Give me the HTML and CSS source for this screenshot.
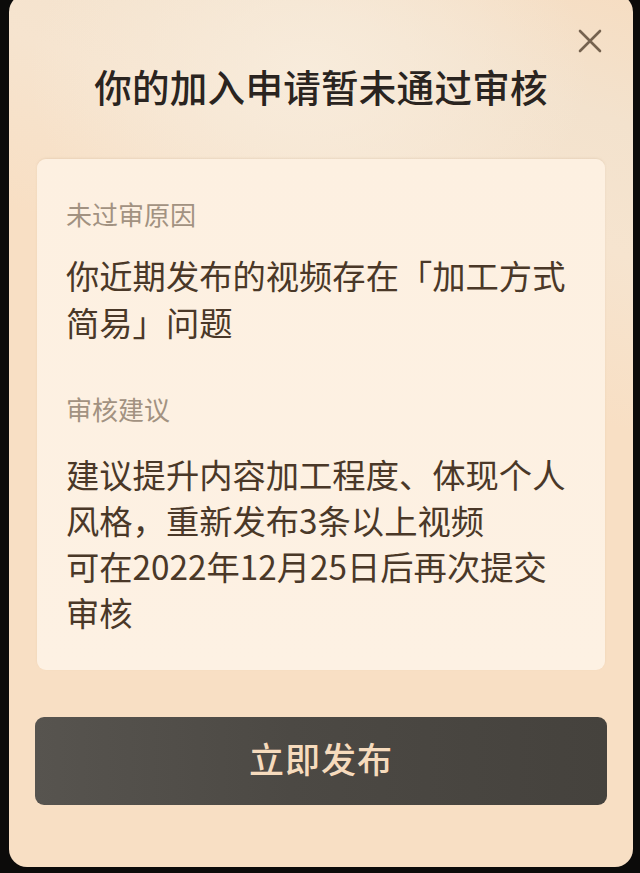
FILE: index.html
```
<!DOCTYPE html>
<html lang="zh-CN">
<head>
<meta charset="utf-8">
<title>审核结果</title>
<link rel="stylesheet" href="styles.css">
</head>
<body>
<div class="modal">
  <button class="close" aria-label="关闭">
    <svg viewBox="0 0 24 24" width="24" height="24"><path d="M2 2 L22 22 M22 2 L2 22" stroke="#75624f" stroke-width="2.6" stroke-linecap="round" fill="none"/></svg>
  </button>
  <h1 class="title">你的加入申请暂未通过审核</h1>
  <div class="card">
    <div class="label">未过审原因</div>
    <p class="text">你近期发布的视频存在「加工方式<br>简易」问题</p>
    <div class="label label-second">审核建议</div>
    <p class="text text-second">建议提升内容加工程度、体现个人<br>风格，重新发布3条以上视频<br>可在2022年12月25日后再次提交<br>审核</p>
  </div>
  <button class="publish">立即发布</button>
</div>
</body>
</html>
```
FILE: styles.css
```
* { box-sizing: border-box; }
html, body { margin: 0; padding: 0; }
body {
  background: #0c0b0a;
  height: 873px;
  overflow: hidden;
  font-family: "Noto Sans CJK SC", "Noto Sans", sans-serif;
}
.modal {
  position: relative;
  margin: -6px 7px 0 9px;
  height: 873px;
  border-radius: 18px;
  padding: 66px 28px 0;
  display: flex;
  flex-direction: column;
  background:
    radial-gradient(ellipse 45% 22% at 48% 9%, rgba(248, 236, 220, 0.95), rgba(248, 236, 220, 0) 100%),
    linear-gradient(200deg, #f6ddc2 0%, #f3e2cd 12%, #f6e4cf 24%, #f8dfc4 40%, #f8dfc4 100%);
}
.close {
  position: absolute;
  top: 35px;
  right: 31px;
  width: 24px;
  height: 24px;
  padding: 0;
  border: 0;
  background: none;
}
.close svg { display: block; }
.title {
  margin: 0;
  text-align: center;
  font-size: 37.5px;
  line-height: 52px;
  font-weight: 500;
  color: #2a2420;
  letter-spacing: 0.3px;
}
.card {
  margin-top: 47px;
  background: linear-gradient(180deg, #fdf0e1 0%, #fdf1e3 100%);
  border-radius: 9px;
  padding: 37px 29px 35px;
  box-shadow: 0 -1px 2px rgba(200, 170, 140, 0.25);
}
.label {
  font-size: 26px;
  line-height: 36px;
  color: #a29281;
}
.label-second { margin-top: 46px; }
.text {
  margin: 19px 0 0;
  font-size: 33.3px;
  line-height: 47px;
  color: #4a3828;
}
.text-second { line-height: 46px; margin-top: 24px; }
.publish {
  margin: 47px -2px 0;
  height: 88px;
  padding: 0 0 8px;
  border: 0;
  border-radius: 9px;
  background: linear-gradient(90deg, #57544f 0%, #4c4944 45%, #45423d 100%);
  color: #f6dbbd;
  font-family: "Noto Sans CJK SC", "Noto Sans", sans-serif;
  font-size: 35px;
  font-weight: 500;
  letter-spacing: 1px;
}
```
